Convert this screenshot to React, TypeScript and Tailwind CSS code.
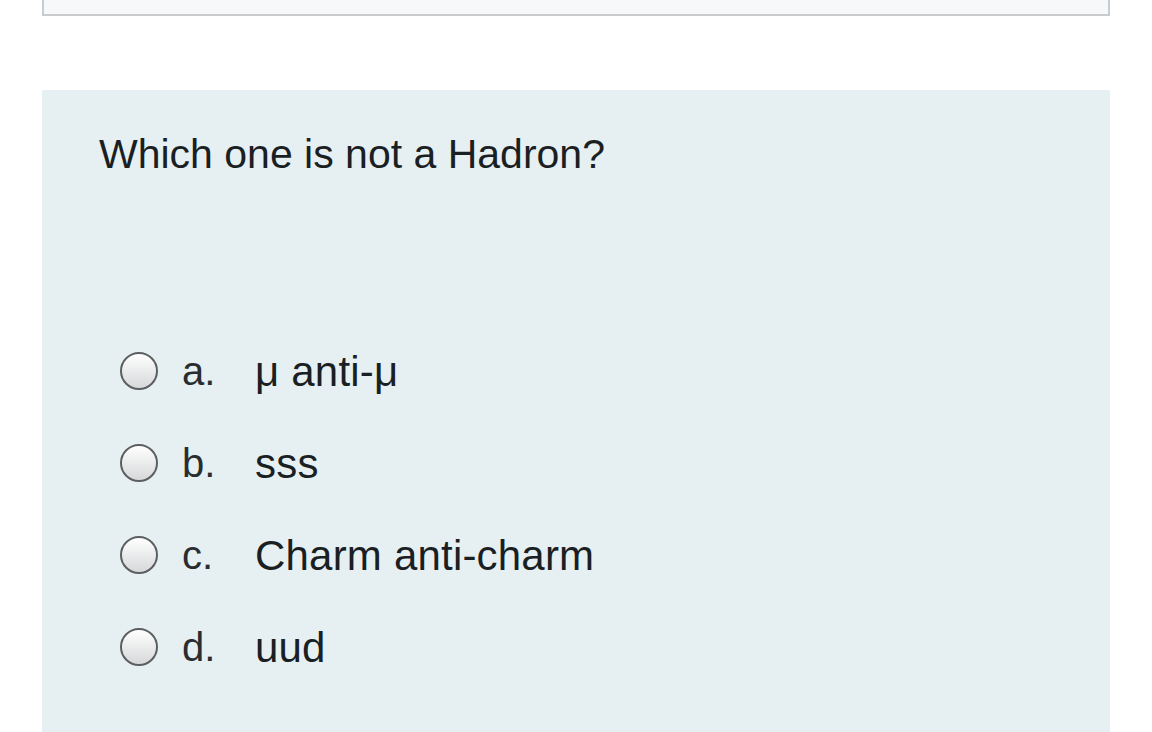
const options = [
  { letter: "a.", text: "μ anti-μ" },
  { letter: "b.", text: "sss" },
  { letter: "c.", text: "Charm anti-charm" },
  { letter: "d.", text: "uud" },
];

function Radio() {
  return (
    <span className="block w-[38px] h-[38px] shrink-0 rounded-full border-2 border-[#5c5f61] bg-linear-to-b from-white to-[#d6d8d9]" />
  );
}

export default function App() {
  return (
    <div className="w-[1152px] h-[732px] overflow-hidden bg-white text-[#1a1f23]" style={{ fontFamily: '"Liberation Sans", Arial, sans-serif' }}>
      {/* previous question card, cut off at the top */}
      <div className="mx-[42px] h-[16px] border-x-2 border-b-2 border-[#c9cccf] bg-[#f7f8fa]" />

      <div className="mt-[74px] mx-[42px] h-[700px] bg-[#e6f0f3] pl-[57px] pt-[40px]">
        <div className="text-[41px] leading-[49px]">Which one is not a Hadron?</div>

        <div className="mt-[146px] ml-[21px]">
          {options.map((o) => (
            <label key={o.letter} className="flex items-center h-[92px]">
              <Radio />
              <span className="ml-[24px] w-[73px] text-[40px] leading-[49px] text-[#2a2d30]">{o.letter}</span>
              <span className="text-[42px] leading-[49px] tracking-[0.2px]">{o.text}</span>
            </label>
          ))}
        </div>
      </div>
    </div>
  );
}
